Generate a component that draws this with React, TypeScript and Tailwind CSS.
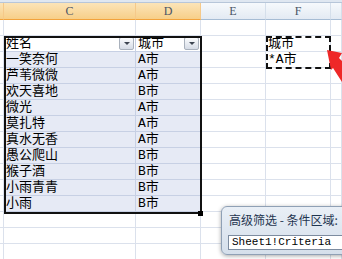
import React from 'react';

// column widths: gutter(B), C, D, E, F, G
const COLS = [4, 132, 65, 65, 65, 11];
const HEAD = ['', 'C', 'D', 'E', 'F', ''];

const people: [string, string][] = [
  ['一笑奈何', 'A市'],
  ['芦苇微微', 'A市'],
  ['欢天喜地', 'B市'],
  ['微光', 'A市'],
  ['莫扎特', 'A市'],
  ['真水无香', 'A市'],
  ['愚公爬山', 'B市'],
  ['猴子酒', 'B市'],
  ['小雨青青', 'B市'],
  ['小雨', 'B市'],
];

const cellFont = { fontFamily: "'Liberation Mono', 'Noto Sans CJK SC', monospace" };

function FilterButton() {
  return (
    <span className="ml-auto mr-[1px] flex h-[13px] w-[15px] items-center justify-center rounded-[2px] border border-[#a9b1bc] bg-gradient-to-b from-[#fbfcfd] to-[#d6dce6]">
      <span className="h-0 w-0 border-x-[3px] border-t-[3px] border-x-transparent border-t-[#3c4450]" />
    </span>
  );
}

type Cell = { text?: string; filter?: boolean; fill?: 'head' | 'body' };

function buildRow(r: number): Cell[] {
  const row: Cell[] = COLS.map(() => ({}));
  if (r === 1) {
    row[1] = { text: '姓名', filter: true, fill: 'head' };
    row[2] = { text: '城市', filter: true, fill: 'head' };
    row[4] = { text: '城市' };
  } else if (r >= 2 && r <= 11) {
    const [n, c] = people[r - 2];
    row[1] = { text: n, fill: 'body' };
    row[2] = { text: c, fill: 'body' };
    if (r === 2) row[4] = { text: '*A市' };
  }
  return row;
}

export default function App() {
  const rows = Array.from({ length: 15 }, (_, i) => i);

  return (
    <div className="relative h-[259px] w-[342px] overflow-hidden bg-white">
      {/* strip above column headers */}
      <div className="h-[3px] border-b border-[#b7c6d9] bg-[#dfe7f1]" />

      {/* column headers */}
      <div className="flex h-[17px]">
        {COLS.map((w, i) => {
          const selected = i <= 2;
          return (
            <div
              key={i}
              style={{ width: w, fontFamily: "'Liberation Serif', serif" }}
              className={
                'flex shrink-0 items-center justify-center border-b border-r text-[12px] ' +
                (selected
                  ? 'border-b-[#f2a33c] border-r-[#f5c98a] bg-gradient-to-b from-[#fbe4b8] to-[#f7cf88] text-[#4a5466]'
                  : 'border-b-[#a6bcd4] border-r-[#d5dfeb] bg-gradient-to-b from-[#f6f9fc] to-[#e3eaf3] text-[#4a5466]')
              }
            >
              {HEAD[i]}
            </div>
          );
        })}
      </div>

      {/* grid */}
      <div className="flex flex-col">
        {rows.map((r) => (
          <div key={r} className="flex h-[16px]">
            {buildRow(r).map((c, i) => (
              <div
                key={i}
                style={{ width: COLS[i], ...cellFont }}
                className={
                  'flex shrink-0 items-center whitespace-nowrap border-b border-r pl-[2px] text-[13px] leading-none text-black ' +
                  (c.fill === 'body'
                    ? 'border-b-[#c7d0e4] border-r-[#c7d0e4] bg-[#e6eaf5]'
                    : c.fill === 'head'
                      ? 'border-b-[#c7d0e4] border-r-[#c7d0e4] bg-white'
                      : 'border-b-[#dbe1ec] border-r-[#dbe1ec]')
                }
              >
                {c.text}
                {c.filter && <FilterButton />}
              </div>
            ))}
          </div>
        ))}
      </div>

      {/* table selection border */}
      <div className="absolute left-[4px] top-[36px] h-[178px] w-[198px] border-2 border-[#111]" />
      <div className="absolute left-[198px] top-[211px] h-[5px] w-[5px] bg-black" />

      {/* criteria range marquee */}
      <div className="absolute left-[266px] top-[36px] h-[33px] w-[65px] border-2 border-dashed border-[#111]" />

      {/* red pointer arrow */}
      <svg className="absolute left-[320px] top-[44px]" width="22" height="50" viewBox="0 0 22 50">
        <polygon points="7,6 22,9 19,14 22,17 22,38 13,24 11,26" fill="#ee2828" />
      </svg>

      {/* advanced filter criteria dialog */}
      <div className="absolute left-[221px] top-[206px] h-[49px] w-[140px] rounded-[6px] border border-[#8fa0b5] bg-gradient-to-b from-[#e9eff6] to-[#d5dfeb] shadow-[0_1px_4px_rgba(0,0,0,0.35)]">
        <div
          className="mt-[7px] pl-[7px] text-[12px] leading-none text-[#1f3550]"
          style={{ fontFamily: "'Noto Sans CJK SC', sans-serif" }}
        >
          高级筛选 - 条件区域:
        </div>
        <div
          className="ml-[6px] mt-[9px] flex h-[15px] items-center border border-[#7d8ca0] bg-white pl-[3px] text-[11px] leading-none text-black"
          style={{ fontFamily: "'Liberation Mono', monospace" }}
        >
          Sheet1!Criteria
        </div>
      </div>
    </div>
  );
}
